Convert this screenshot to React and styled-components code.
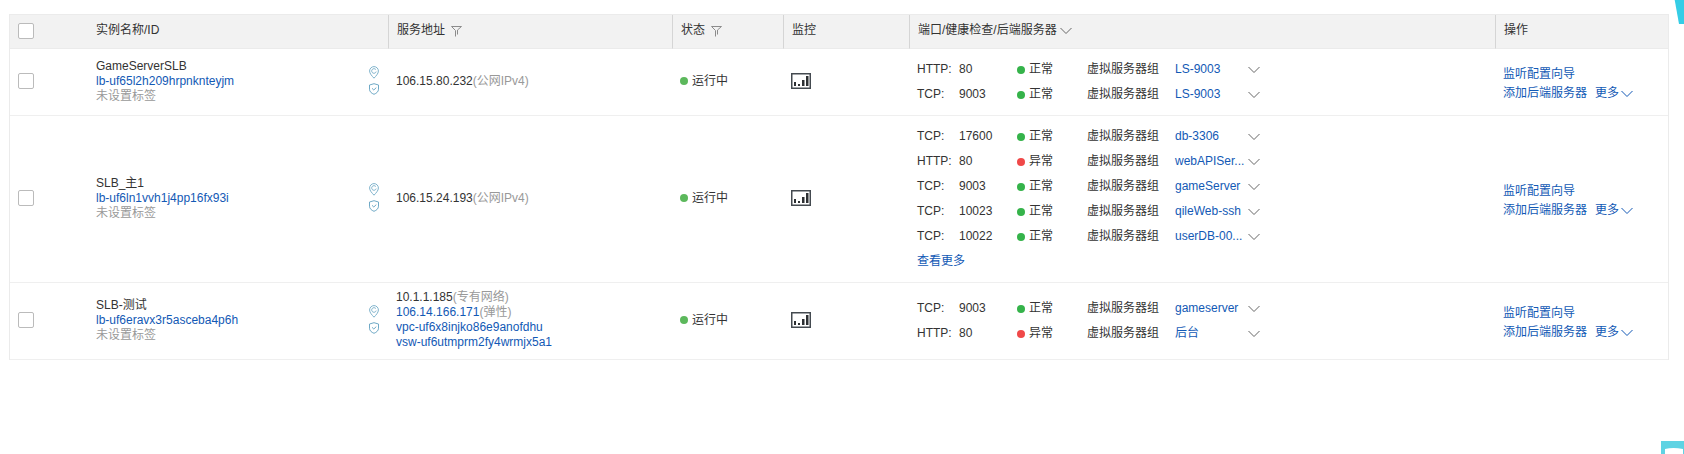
import React from "react";
import styled, { createGlobalStyle } from "styled-components";

const GlobalStyle = createGlobalStyle`
  * { box-sizing: border-box; }
  body {
    margin: 0;
    background: #fff;
    color: #333;
    font-family: "Liberation Sans", "Noto Sans CJK SC", sans-serif;
    font-size: 12px;
    line-height: 15px;
    overflow-x: hidden;
  }
`;

const Page = styled.main`
  padding: 14px 15px 14px 9px;
`;

const Table = styled.table`
  width: 100%;
  table-layout: fixed;
  border-collapse: separate;
  border-spacing: 0;
  border: 1px solid #ebebeb;
  border-bottom: 0;
`;

const Col = styled.col`
  width: ${(p) => (p.$w ? `${p.$w}px` : "auto")};
`;

const HeadCell = styled.th`
  height: 34px;
  padding: 0 8px 2px;
  background: #f2f2f2;
  border-bottom: 1px solid #ebebeb;
  border-left: ${(p) => (p.$divided ? "1px solid #d5d5d5" : "0")};
  font-weight: 400;
  text-align: left;
`;

const HeadLabel = styled.div`
  display: flex;
  align-items: center;
  gap: ${(p) => p.$gap || 0}px;
`;

const Cell = styled.td`
  padding: 7px 8px 9px;
  border-bottom: 1px solid #efefef;
  vertical-align: middle;
`;

const ListenerCell = styled(Cell)`
  padding: 8px;
`;

const ActionCell = styled(Cell)`
  padding: 12px 8px 8px;
`;

const Checkbox = styled.input.attrs({ type: "checkbox" })`
  appearance: none;
  display: block;
  width: 16px;
  height: 16px;
  margin: 0;
  background: #fff;
  border: 1px solid #bbb;
  border-radius: 2px;
  &:checked { background: #1a5fb4; }
`;

const IconButton = styled.button`
  display: flex;
  align-items: center;
  gap: 2px;
  padding: 0;
  border: 0;
  background: none;
  color: ${(p) => p.$color || "#666"};
  font: inherit;
  cursor: pointer;
`;

const Link = styled.a`
  color: #1259b5;
  text-decoration: none;
  white-space: nowrap;
`;

const Muted = styled.span`
  color: #999;
`;

const NameBox = styled.div`
  display: flex;
  align-items: center;
  justify-content: space-between;
  padding-right: 1px;
`;

const Lines = styled.div`
  display: flex;
  flex-direction: column;
  align-items: flex-start;
`;

const Badges = styled.div`
  display: flex;
  flex-direction: column;
  gap: 4px;
  padding-bottom: 1px;
`;

const Status = styled.span`
  display: flex;
  align-items: center;
  gap: 4px;
`;

const Dot = styled.i`
  width: 8px;
  height: 8px;
  border-radius: 50%;
  background: ${(p) => p.$color};
`;

const Listener = styled.div`
  display: grid;
  grid-template-columns: 42px 58px 70px 88px 73px 12px;
  align-items: center;
  height: 25px;
`;

const MoreRow = styled.div`
  display: flex;
  align-items: center;
  height: 25px;
`;

const Actions = styled.div`
  display: flex;
  flex-wrap: wrap;
  column-gap: 8px;
  line-height: 19px;
`;

const ActionBreak = styled.span`
  flex-basis: 100%;
`;

const TopWidget = styled.svg`
  position: fixed;
  top: 0;
  right: 0;
`;

const BottomWidget = styled.svg`
  position: fixed;
  bottom: 0;
  right: 0;
`;

const Chevron = () => (
  <svg width="12" height="8" viewBox="0 0 12 8" fill="none" stroke="currentColor" aria-hidden="true">
    <path d="M.5 1 6 6.500 11.500 1" />
  </svg>
);

const Funnel = () => (
  <svg width="11" height="12" viewBox="0 0 11 12" fill="none" stroke="#8c8c8c" aria-hidden="true">
    <path d="M.5 1.500h10L6.500 5v4.500M.5 1.500 4.500 5.500v6" />
  </svg>
);

const Pin = () => (
  <svg width="10" height="13" viewBox="0 0 10 13" fill="none" stroke="#7fb3cc" aria-hidden="true">
    <path d="M5 12.200C3 10 .6 7.600.6 5A4.400 4.400 0 0 1 9.400 5C9.400 7.600 7 10 5 12.200Z" />
    <path d="M6.900 3.700A2.300 2.300 0 1 0 7.200 5.600" />
  </svg>
);

const Shield = () => (
  <svg width="10" height="12" viewBox="0 0 10 12" fill="none" stroke="#6fa9c6" aria-hidden="true">
    <path d="M5 .7 9.500 2v4.200C9.500 8.700 7.500 10.300 5 11.300 2.500 10.300.5 8.700.5 6.200V2Z" />
    <path d="M3 5.300 4.800 7 7.300 4.600" />
  </svg>
);

const Monitor = () => (
  <svg width="20" height="16" viewBox="0 0 20 16" aria-hidden="true">
    <path d="M.75.75h18.500v14.500H.75z" fill="#fff" stroke="#444a50" strokeWidth="1.500" />
    <path d="M3 9h2v4H3zM7 11h2v2H7zM11 7h2.500v6H11zM15 3h2.500v10H15z" fill="#2d3033" />
  </svg>
);

const OK = "正常";
const BAD = "异常";

const rows = [
  {
    name: "GameServerSLB",
    id: "lb-uf65l2h209hrpnknteyjm",
    addresses: [{ text: "106.15.80.232", note: "(公网IPv4)" }],
    listeners: [
      ["HTTP:", "80", OK, "LS-9003"],
      ["TCP:", "9003", OK, "LS-9003"],
    ],
  },
  {
    name: "SLB_主1",
    id: "lb-uf6ln1vvh1j4pp16fx93i",
    addresses: [{ text: "106.15.24.193", note: "(公网IPv4)" }],
    listeners: [
      ["TCP:", "17600", OK, "db-3306"],
      ["HTTP:", "80", BAD, "webAPISer..."],
      ["TCP:", "9003", OK, "gameServer"],
      ["TCP:", "10023", OK, "qileWeb-ssh"],
      ["TCP:", "10022", OK, "userDB-00..."],
    ],
    more: true,
  },
  {
    name: "SLB-测试",
    id: "lb-uf6eravx3r5asceba4p6h",
    addresses: [
      { text: "10.1.1.185", note: "(专有网络)" },
      { text: "106.14.166.171", note: "(弹性)", link: true },
      { text: "vpc-uf6x8injko86e9anofdhu", link: true },
      { text: "vsw-uf6utmprm2fy4wrmjx5a1", link: true },
    ],
    listeners: [
      ["TCP:", "9003", OK, "gameserver"],
      ["HTTP:", "80", BAD, "后台"],
    ],
  },
];

function InstanceRow({ row }) {
  return (
    <tr>
      <Cell><Checkbox aria-label={row.name} /></Cell>
      <Cell>
        <NameBox>
          <Lines>
            <span>{row.name}</span>
            <Link href="#">{row.id}</Link>
            <Muted>未设置标签</Muted>
          </Lines>
          <Badges><Pin /><Shield /></Badges>
        </NameBox>
      </Cell>
      <Cell>
        <Lines>
          {row.addresses.map((a) => (
            <span key={a.text}>
              {a.link ? <Link href="#">{a.text}</Link> : a.text}
              {a.note && <Muted>{a.note}</Muted>}
            </span>
          ))}
        </Lines>
      </Cell>
      <Cell><Status><Dot $color="#5cb85c" />运行中</Status></Cell>
      <Cell><IconButton aria-label="监控"><Monitor /></IconButton></Cell>
      <ListenerCell>
        {row.listeners.map(([protocol, port, health, group]) => (
          <Listener key={protocol + port}>
            <span>{protocol}</span>
            <span>{port}</span>
            <Status><Dot $color={health === OK ? "#35b34a" : "#f04848"} />{health}</Status>
            <span>虚拟服务器组</span>
            <Link href="#">{group}</Link>
            <IconButton aria-label={group}><Chevron /></IconButton>
          </Listener>
        ))}
        {row.more && <MoreRow><Link href="#">查看更多</Link></MoreRow>}
      </ListenerCell>
      <ActionCell>
        <Actions>
          <Link href="#">监听配置向导</Link>
          <ActionBreak />
          <Link href="#">添加后端服务器</Link>
          <IconButton $color="#1259b5">更多<Chevron /></IconButton>
        </Actions>
      </ActionCell>
    </tr>
  );
}

export default function App() {
  return (
    <>
      <GlobalStyle />
      <Page>
        <Table>
          <colgroup>
            <Col $w={78} />
            <Col $w={300} />
            <Col $w={284} />
            <Col $w={111} />
            <Col $w={126} />
            <Col />
            <Col $w={173} />
          </colgroup>
          <thead>
            <tr>
              <HeadCell><Checkbox aria-label="全选" /></HeadCell>
              <HeadCell>实例名称/ID</HeadCell>
              <HeadCell $divided>
                <HeadLabel $gap={6}>服务地址<IconButton aria-label="筛选服务地址"><Funnel /></IconButton></HeadLabel>
              </HeadCell>
              <HeadCell $divided>
                <HeadLabel $gap={6}>状态<IconButton aria-label="筛选状态"><Funnel /></IconButton></HeadLabel>
              </HeadCell>
              <HeadCell $divided>监控</HeadCell>
              <HeadCell $divided>
                <HeadLabel $gap={3}>端口/健康检查/后端服务器<IconButton aria-label="展开"><Chevron /></IconButton></HeadLabel>
              </HeadCell>
              <HeadCell $divided>操作</HeadCell>
            </tr>
          </thead>
          <tbody>
            {rows.map((row) => <InstanceRow key={row.id} row={row} />)}
          </tbody>
        </Table>
      </Page>
      <TopWidget width="10" height="24" viewBox="0 0 10 24" aria-hidden="true">
        <path d="M.7 0H10v24H5Z" fill="#35cde6" />
      </TopWidget>
      <BottomWidget width="23" height="13" viewBox="0 0 23 13" aria-hidden="true">
        <path d="M0 0h23v13H0Z" fill="#5fd3e3" />
        <path d="M4 13V8q8-2 18 0v5Z" fill="#fff" />
      </BottomWidget>
    </>
  );
}
